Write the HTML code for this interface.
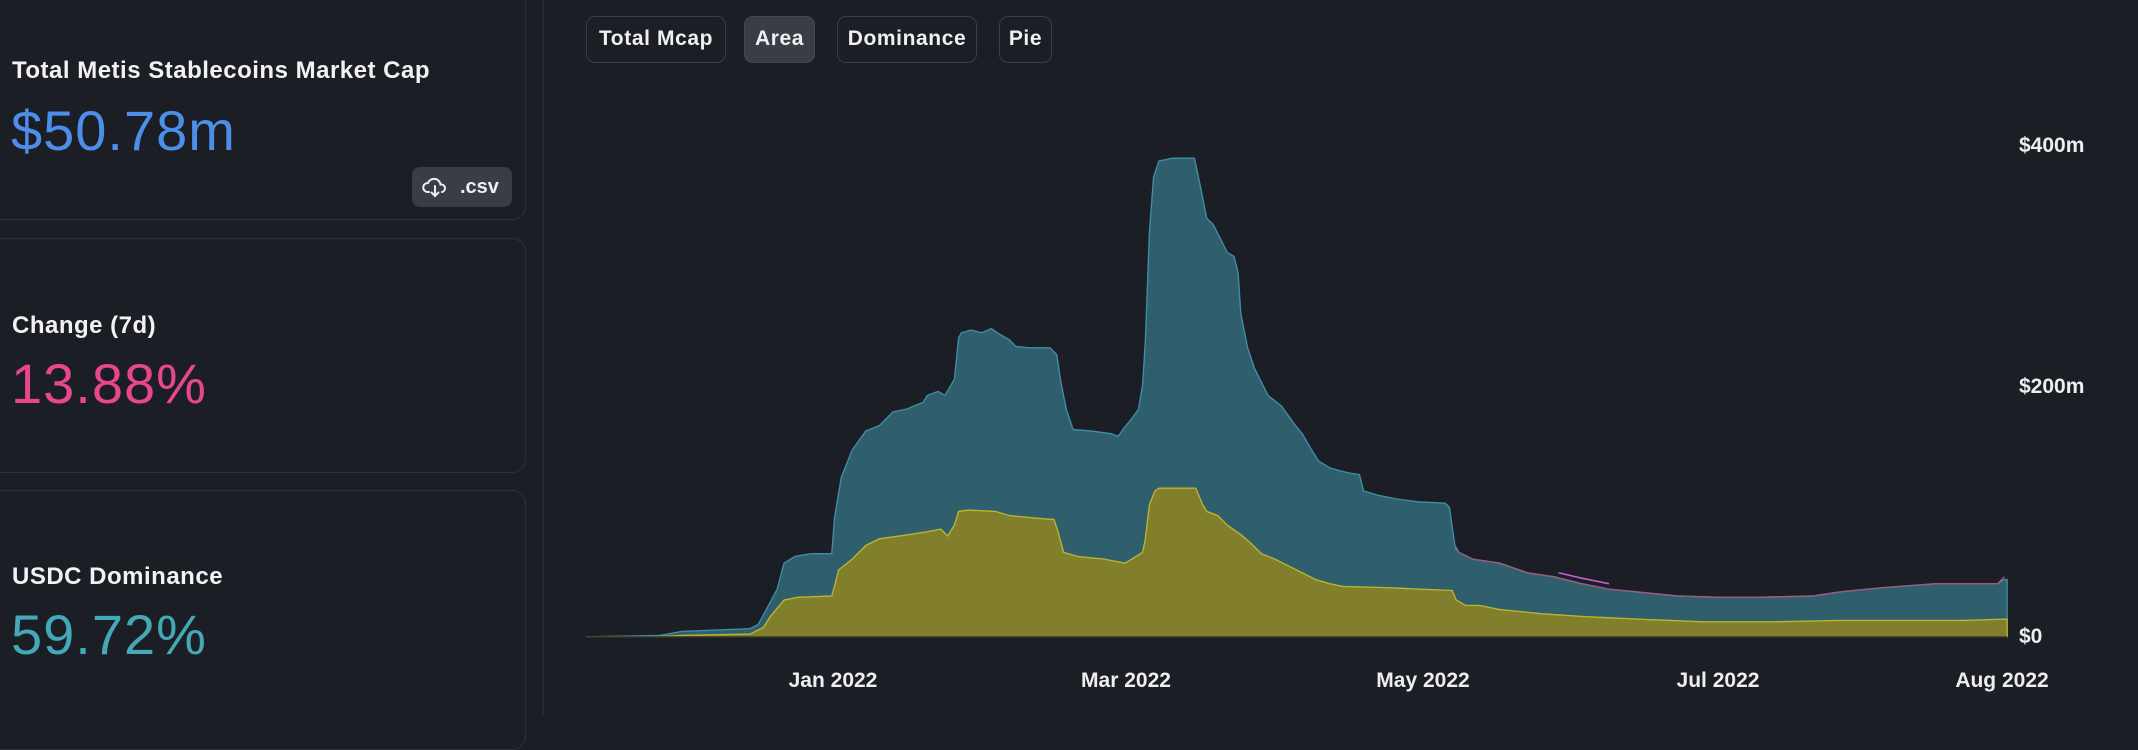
<!DOCTYPE html>
<html><head><meta charset="utf-8"><style>
*{margin:0;padding:0;box-sizing:border-box}
body{width:2138px;height:716px;background:#1c1e26;font-family:"Liberation Sans",sans-serif;color:#fff;position:relative;overflow:hidden}
.card{position:absolute;left:-20px;width:546px;border:1.5px solid #2e313c;border-radius:14px;background:#1c1e26}
.lbl{position:absolute;left:12px;font-size:24px;font-weight:bold;letter-spacing:0.5px;color:#f2f2f2}
.big{position:absolute;left:11px;font-size:56px;letter-spacing:1px}
.btn{position:absolute;top:16px;height:47px;border:1.5px solid #3a3d4a;border-radius:9px;font-size:21px;font-weight:bold;letter-spacing:0.6px;line-height:44px;text-align:center;color:#f0f0f0}
.ax{position:absolute;font-size:21px;font-weight:bold;color:#eee;white-space:nowrap}
.dx{transform:translateX(-50%)}
</style></head><body>
<div class="card" style="top:-20px;height:240px"></div>
<div class="card" style="top:238px;height:235px"></div>
<div class="card" style="top:490px;height:260px"></div>
<div style="position:absolute;left:542px;top:0;width:2px;height:716px;background:#262833"></div>

<div class="lbl" style="top:57px">Total Metis Stablecoins Market Cap</div>
<div class="big" style="top:98px;color:#4d8ee8">$50.78m</div>
<div style="position:absolute;left:412px;top:167px;width:100px;height:40px;background:#3a3d46;border-radius:8px;font-size:20px;line-height:40px;color:#eee">
<svg style="position:absolute;left:10px;top:9px" width="26" height="22" viewBox="0 0 26 22" fill="none" stroke="#eee" stroke-width="2" stroke-linecap="round"><path d="M7 16H5.5A4.5 4.5 0 0 1 6 7a6.5 6.5 0 0 1 12.5 1.5h1A3.8 3.8 0 0 1 20 16"/><path d="M13 10v10M9.5 16.5l3.5 3.5 3.5-3.5"/></svg>
<span style="position:absolute;left:48px;font-weight:bold">.csv</span></div>

<div class="lbl" style="top:312px">Change (7d)</div>
<div class="big" style="top:351px;color:#e8478d">13.88%</div>
<div class="lbl" style="top:563px">USDC Dominance</div>
<div class="big" style="top:602px;color:#44a8b6">59.72%</div>

<div class="btn" style="left:586px;width:140px">Total Mcap</div>
<div class="btn" style="left:744px;width:71px;background:#3a3d46;border-color:#44475a">Area</div>
<div class="btn" style="left:837px;width:140px">Dominance</div>
<div class="btn" style="left:999px;width:53px">Pie</div>

<svg style="position:absolute;left:0;top:0" width="2138" height="716" viewBox="0 0 1568 525">
<polygon fill="#2f5e6c" stroke="#3f8ea6" stroke-width="1" points="430,467 484,466 500,463 550,461 556,458 562,447 570,432 575,413 583,408 595,406 610,406 612,380 617,350 625,330 635,316 645,312 655,302 665,300 672,297 677,295 680,290 688,287 693,290 700,278 703,248 705,244 712,242 720,244 727,241 733,245 740,249 745,254 755,255 770,255 775,260 778,280 782,300 787,315 800,316 815,318 820,320 825,313 830,307 835,300 838,282 840,250 843,170 846,130 850,118 860,116 876,116 880,135 885,160 890,165 895,175 900,185 905,188 908,200 910,230 915,255 920,270 930,290 940,298 945,305 950,312 955,318 962,330 967,338 975,343 982,345 990,347 997,348 1000,360 1010,363 1025,366 1040,368 1060,369 1063,372 1067,400 1070,405 1080,410 1100,413 1120,420 1140,423 1160,428 1180,432 1200,434 1230,437 1260,438 1290,438 1330,437 1350,434 1380,431 1420,428 1465,428 1470,425 1472,425 1472,467"/>
<polyline fill="none" stroke="#a05a80" stroke-width="1" points="1067,402 1070,405 1080,410 1100,413 1120,420 1140,423 1160,428 1180,432 1200,434 1230,437 1260,438 1290,438 1330,437 1350,434 1380,431 1420,428 1465,428 1470,423"/>
<polyline fill="none" stroke="#c060d0" stroke-width="1.2" points="1143,420 1160,424 1180,428"/>
<polygon fill="#827f2c" stroke="#b8b530" stroke-width="1" points="430,467 480,467 500,466 550,465 560,460 565,452 575,440 585,438 610,437 612,430 615,418 625,410 635,400 645,395 660,393 680,390 690,388 695,393 700,385 703,375 710,374 730,375 740,378 760,380 773,381 776,390 780,405 790,408 810,410 825,413 830,410 838,405 840,395 843,370 847,360 850,358 877,358 882,370 885,375 893,378 900,385 910,392 917,398 925,406 935,410 945,415 955,420 965,425 975,428 985,430 1020,431 1040,432 1065,433 1068,440 1075,444 1085,444 1100,447 1130,450 1160,452 1200,454 1250,456 1300,456 1350,455 1400,455 1440,455 1472,454 1472,467"/>
<line x1="430" y1="467" x2="1472" y2="467" stroke="#3a3c2a" stroke-width="1"/>
</svg>

<div class="ax" style="left:2019px;top:134px">$400m</div>
<div class="ax" style="left:2019px;top:375px">$200m</div>
<div class="ax" style="left:2019px;top:625px">$0</div>
<div class="ax dx" style="left:833px;top:669px">Jan 2022</div>
<div class="ax dx" style="left:1126px;top:669px">Mar 2022</div>
<div class="ax dx" style="left:1423px;top:669px">May 2022</div>
<div class="ax dx" style="left:1718px;top:669px">Jul 2022</div>
<div class="ax dx" style="left:2002px;top:669px">Aug 2022</div>
</body></html>
